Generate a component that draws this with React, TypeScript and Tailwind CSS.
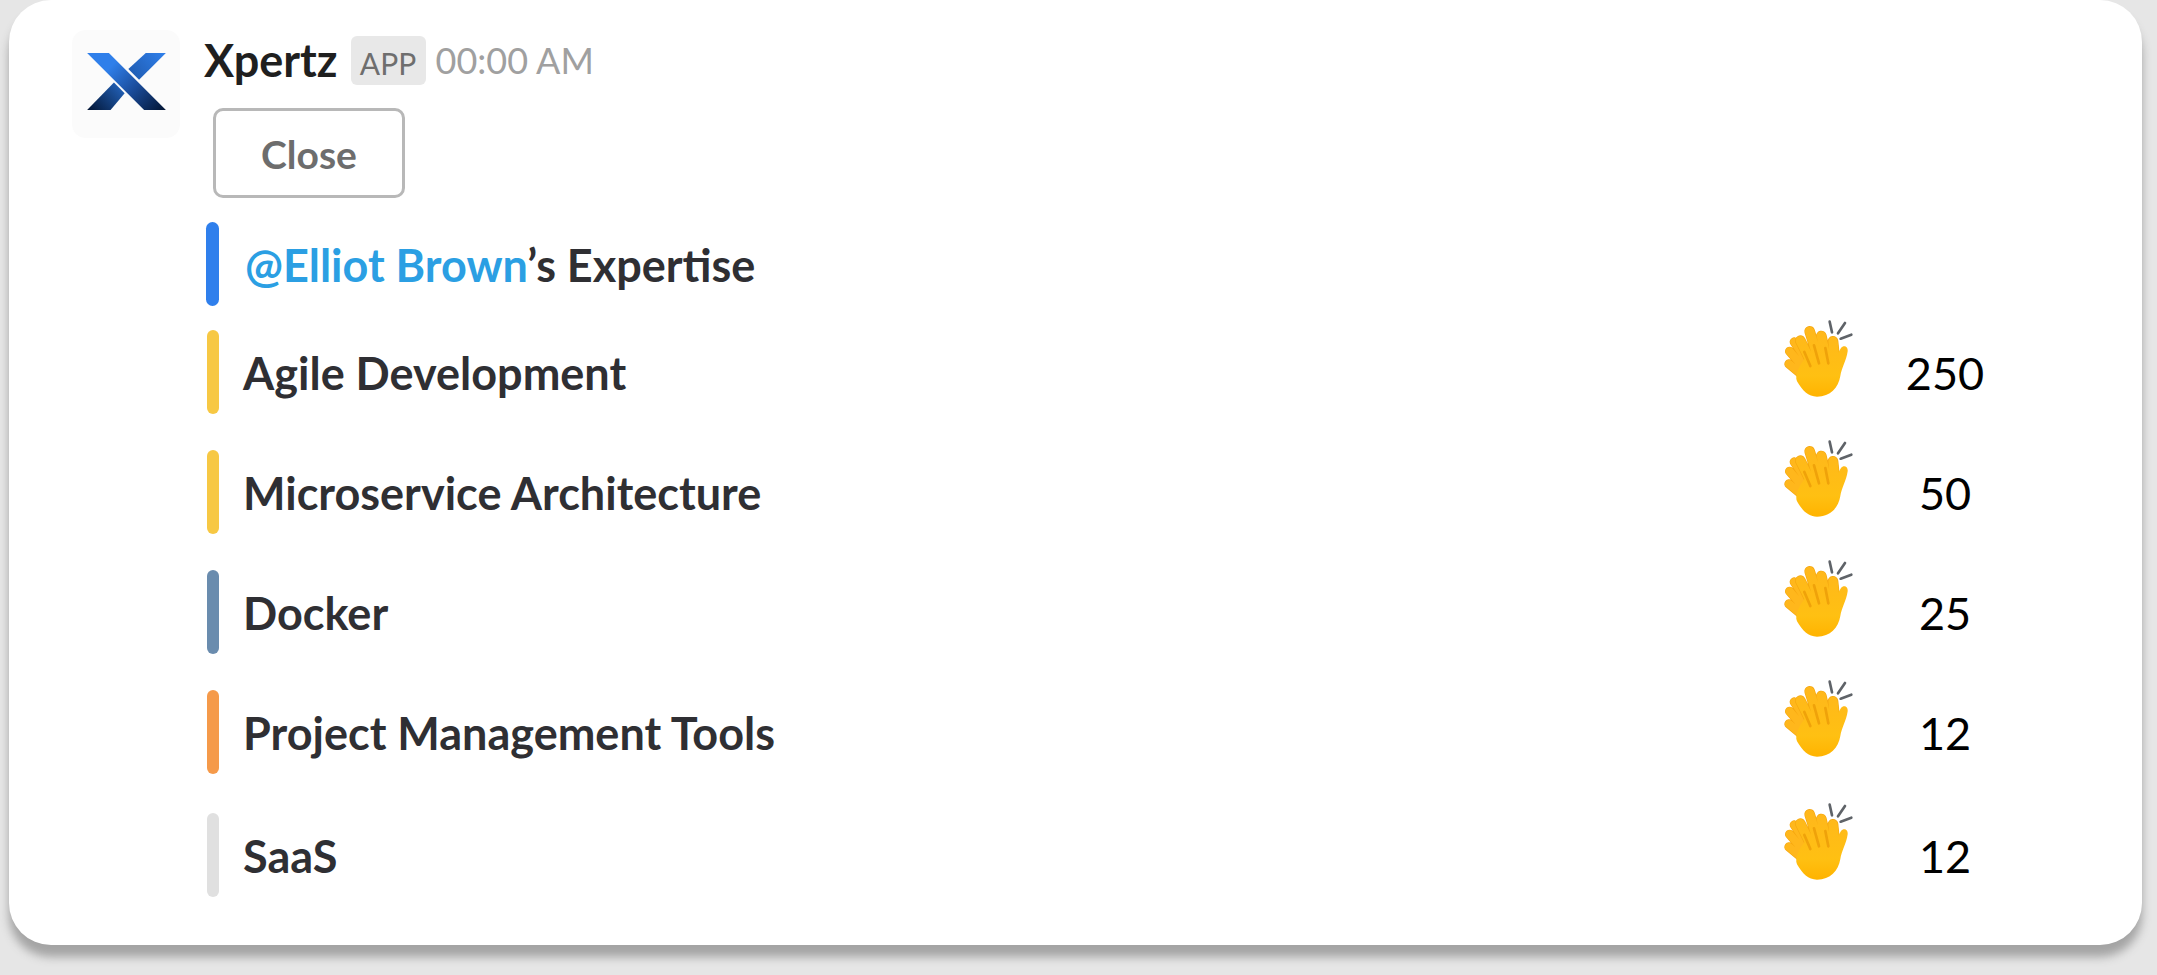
import React from "react";

function Logo() {
  return (
    <svg width="79" height="57" viewBox="80 100 235 170" className="mb-[5px]">
      <defs>
        <linearGradient id="m" x1="130" y1="110" x2="300" y2="275" gradientUnits="userSpaceOnUse">
          <stop offset="0.15" stopColor="#2F7FEA" />
          <stop offset="0.55" stopColor="#1B4D9C" />
          <stop offset="1" stopColor="#031738" />
        </linearGradient>
        <linearGradient id="u" x1="310" y1="100" x2="215" y2="180" gradientUnits="userSpaceOnUse">
          <stop offset="0" stopColor="#2F7FEA" />
          <stop offset="1" stopColor="#1F5BB0" />
        </linearGradient>
        <linearGradient id="l" x1="185" y1="190" x2="90" y2="275" gradientUnits="userSpaceOnUse">
          <stop offset="0" stopColor="#2465BF" />
          <stop offset="1" stopColor="#031738" />
        </linearGradient>
      </defs>
      <polygon points="80,100 145,100 315,270 250,270" fill="url(#m)" />
      <polygon points="255,100 315,100 235,180 203,148" fill="url(#u)" />
      <polygon points="160,188 192,220 150,270 80,270" fill="url(#l)" />
    </svg>
  );
}

function Clap({ id }: { id: string }) {
  const back = "M112 205L58 160M108 178L60 122M112 150L74 94";
  const front = "M132 170L92 90M152 165L120 62M175 165L155 76M198 170L190 92";
  return (
    <svg width="72" height="78" viewBox="40 25 216 234" className="shrink-0">
      <defs>
        <linearGradient id={id} x1="0" y1="50" x2="0" y2="258" gradientUnits="userSpaceOnUse">
          <stop offset="0" stopColor="#FFB71C" />
          <stop offset="0.7" stopColor="#FFC012" />
          <stop offset="1" stopColor="#FFB300" />
        </linearGradient>
      </defs>
      <path d="M180 33L187 65M226 37L205 68M245 72L213 84" stroke="#5f6368" strokeWidth="8" strokeLinecap="round" fill="none" />
      <path d={back} stroke="#F5A70F" strokeWidth="28" strokeLinecap="round" fill="none" />
      <path d={back} stroke="#FFB71C" strokeWidth="24" strokeLinecap="round" fill="none" />
      <path d={front} stroke="#F5A70F" strokeWidth="32" strokeLinecap="round" fill="none" />
      <path d={front} stroke={`url(#${id})`} strokeWidth="28" strokeLinecap="round" fill="none" />
      <path
        d="M82 212C98 240 116 258 142 258C182 258 206 232 212 196C216 172 230 150 234 122C236 108 222 102 214 112C206 122 202 140 196 150L110 140C90 160 74 195 82 212Z"
        fill={`url(#${id})`}
      />
      <path d="M122 166L104 124M148 158L133 104M176 158L167 112" stroke="#EFA20A" strokeWidth="8" strokeLinecap="round" fill="none" />
    </svg>
  );
}

const rows = [
  { name: "Agile Development", value: "250", bar: "bg-[#f7c844]", cls: "mt-[24px]" },
  { name: "Microservice Architecture", value: "50", bar: "bg-[#f7c844]", cls: "mt-[36px]" },
  { name: "Docker", value: "25", bar: "bg-[#6a8cae]", cls: "mt-[36px]" },
  { name: "Project Management Tools", value: "12", bar: "bg-[#f59a4a]", cls: "mt-[36px]" },
  { name: "SaaS", value: "12", bar: "bg-[#e0e0e0]", cls: "mt-[39px]" },
];

export default function App() {
  return (
    <div className="h-[975px] w-full overflow-hidden bg-[#e6e6e6] pl-[9px] font-['Lato','Liberation_Sans',sans-serif]">
      <div className="flex h-[945px] w-[2133px] rounded-[42px] bg-white pl-[63px] pr-[117px] pt-[30px] shadow-[0_12px_10px_0_#a4a4a4]">
        <div className="flex h-[108px] w-[108px] shrink-0 items-center justify-center rounded-[14px] bg-[#fbfbfb]">
          <Logo />
        </div>
        <div className="ml-[24px] flex flex-1 flex-col">
          <div className="flex h-[55px] items-center pt-[5px]">
            <span className="text-[45px] font-bold leading-none text-[#1f1f1f]">Xpertz</span>
            <span className="ml-[13px] flex h-[49px] w-[75px] items-center justify-center rounded-[6px] bg-[#e8e8e8] pt-[5px] text-[30px] leading-none text-[#6e6e6e]">
              APP
            </span>
            <span className="ml-[10px] text-[36px] leading-none text-[#a0a0a0]">00:00 AM</span>
          </div>
          <div className="ml-[9px] mt-[23px] flex h-[90px] w-[192px] items-center justify-center rounded-[10px] border-[3px] border-[#b8b8b8] pt-[2px] text-[39px] font-bold leading-none text-[#6d6d6d]">
            Close
          </div>
          <div className="ml-[2px] mt-[24px] flex h-[84px] items-center">
            <div className="h-full w-[13px] rounded-full bg-[#2f7fec]" />
            <span className="ml-[26px] pt-[2px] text-[45px] font-bold leading-none text-[#2f2f33]">
              <span className="text-[#2b9fe3]">@Elliot Brown</span>’s Expertise
            </span>
          </div>
          {rows.map((r) => (
            <div key={r.name} className={`ml-[3px] flex h-[84px] items-center ${r.cls}`}>
              <div className={`h-full w-[12px] rounded-full ${r.bar}`} />
              <span className="ml-[24px] flex-1 pt-[2px] text-[45px] font-bold leading-none text-[#2f2f33]">{r.name}</span>
              <div className="mb-[28px] mr-[10px]">
                <Clap id={`g${r.name.length}${r.value}`} />
              </div>
              <span className="w-[160px] pt-[2px] text-center text-[45px] leading-none text-black">{r.value}</span>
            </div>
          ))}
        </div>
      </div>
    </div>
  );
}
